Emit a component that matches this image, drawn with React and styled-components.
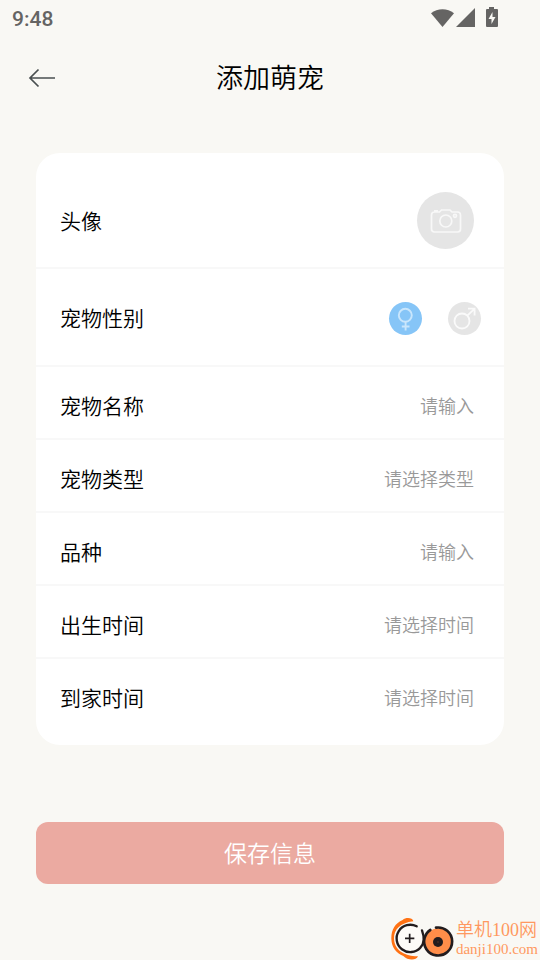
import React, { useState } from 'react';
import styled, { createGlobalStyle, css } from 'styled-components';

const GlobalStyle = createGlobalStyle`
  *, *::before, *::after {
    box-sizing: border-box;
  }

  body {
    margin: 0;
    background: #f9f8f4;
    color: #000;
    font-family: 'Noto Sans CJK SC', sans-serif;
    font-weight: 350;
  }

  button, input, select {
    font-family: inherit;
    font-weight: inherit;
  }
`;

const Page = styled.div`
  min-height: 100vh;
  display: flex;
  flex-direction: column;
`;

const StatusBar = styled.div`
  height: 36px;
  padding: 0 41px 0 12px;
  display: flex;
  align-items: center;
  justify-content: space-between;
  color: #656463;
`;

const Clock = styled.span`
  padding-top: 2px;
  font-family: Roboto, sans-serif;
  font-size: 21px;
  font-weight: 500;
  line-height: 34px;
`;

const StatusIcons = styled.svg`
  width: 68px;
  height: 22px;
  display: block;
`;

const Header = styled.header`
  height: 84px;
  padding: 0 24px;
  display: grid;
  grid-template-columns: 36px 1fr 36px;
  align-items: center;
`;

const BackButton = styled.button`
  width: 36px;
  height: 36px;
  padding: 0;
  border: none;
  background: none;
  cursor: pointer;

  svg {
    display: block;
  }
`;

const Title = styled.h1`
  margin: 0;
  padding-bottom: 2px;
  font-size: 27px;
  font-weight: inherit;
  line-height: 40px;
  text-align: center;
`;

const Form = styled.form`
  margin: 33px 36px 0;
`;

const Card = styled.div`
  padding: 15px 0;
  border-radius: 24px;
  background: #fff;
`;

const rowHeights = {
  avatar: '101px',
  gender: '98px',
  field: '73px',
};

const Row = styled.div`
  height: ${({ $kind = 'field' }) => rowHeights[$kind]};
  padding: ${({ $kind }) =>
    $kind === 'gender' ? '2px 23px 0 24px' : '6px 30px 0 24px'};
  display: flex;
  align-items: center;
  justify-content: space-between;
  border-bottom: 2px solid #f8f8f8;

  &:last-child {
    height: 71px;
    border-bottom: none;
  }
`;

const labelStyle = css`
  padding-bottom: 2px;
  font-size: 21px;
  line-height: 32px;
  white-space: nowrap;
`;

const Label = styled.label`
  ${labelStyle}
`;

const LabelText = styled.span`
  ${labelStyle}
`;

const fieldStyle = css`
  flex: 1;
  min-width: 0;
  height: 34px;
  margin: 0;
  padding: 0 0 2px;
  border: none;
  outline: none;
  background: transparent;
  color: #999;
  font-size: 18px;
  line-height: 32px;
  text-align: right;
`;

const TextInput = styled.input`
  ${fieldStyle}

  &::placeholder {
    color: #999;
    opacity: 1;
  }
`;

const Select = styled.select`
  ${fieldStyle}
  appearance: none;
  text-align-last: right;
`;

const PickerButton = styled.button`
  ${fieldStyle}
  cursor: pointer;
`;

const AvatarButton = styled.button`
  width: 57px;
  height: 57px;
  padding: 0;
  display: flex;
  align-items: center;
  justify-content: center;
  border: none;
  border-radius: 50%;
  background: #e5e5e5;
  cursor: pointer;
`;

const GenderGroup = styled.div`
  display: flex;
  gap: 26px;
`;

const GenderOption = styled.label`
  position: relative;
  width: 33px;
  height: 33px;
  border-radius: 50%;
  background: ${({ $active }) => ($active ? '#86c5f7' : '#e5e5e5')};
  cursor: pointer;

  svg {
    display: block;
  }
`;

const Radio = styled.input`
  position: absolute;
  inset: 0;
  width: 100%;
  height: 100%;
  margin: 0;
  opacity: 0;
  cursor: pointer;
`;

const SaveButton = styled.button`
  width: 100%;
  height: 62px;
  margin-top: 77px;
  padding: 0 0 2px;
  display: block;
  border: none;
  border-radius: 12px;
  background: #ebaaa1;
  color: #fff;
  font-size: 23px;
  line-height: 60px;
  cursor: pointer;
`;

const Brand = styled.footer`
  margin-top: auto;
  padding-right: 2px;
  display: flex;
  align-items: flex-end;
  justify-content: flex-end;
  gap: 1px;
  color: #ff9860;
`;

const BrandText = styled.div`
  padding-bottom: 2px;
  display: flex;
  flex-direction: column;
  font-family: 'Liberation Serif', 'Noto Sans CJK SC', serif;
`;

const BrandName = styled.span`
  font-size: 18px;
  line-height: 20px;
`;

const BrandSite = styled.span`
  font-size: 15px;
  line-height: 18px;
`;

const SystemIcons = () => (
  <StatusIcons viewBox="0 0 68 22" fill="currentColor" aria-hidden="true">
    <path d="M0 6.2C6.5 .8 16.500 .8 23 6.200L11.500 20Z" />
    <path d="M25 20L44 1V20Z" />
    <path
      fillRule="evenodd"
      d="M58 0h5v2h3q1 0 1 1v16q0 1-1 1H56q-1 0-1-1V3q0-1 1-1h2ZM61.500 5L57.500 12h3v5l4-7h-3Z"
    />
  </StatusIcons>
);

const BackIcon = () => (
  <svg width="36" height="36" viewBox="0 0 36 36" fill="none" stroke="#4a4f50" strokeWidth="1.700">
    <path d="M31 18H6M14.500 9.500L6 18l8.500 8.500" />
  </svg>
);

const CameraIcon = () => (
  <svg width="32" height="26" viewBox="0 0 32 26" fill="none" stroke="#f8f8f8" strokeWidth="1.700">
    <path d="M4.500 4H9.500L11.500 2H20L22 4H27.500Q30.500 4 30.500 7V21Q30.500 24 27.500 24H4.500Q1.500 24 1.500 21V7Q1.500 4 4.500 4ZM4 2.800H8" />
    <circle cx="15.800" cy="13" r="6" />
    <circle cx="25" cy="7.800" r="1.500" />
  </svg>
);

const FemaleIcon = () => (
  <svg width="33" height="33" viewBox="0 0 33 33" fill="none" stroke="#c9e6fc" strokeWidth="1.900">
    <circle cx="16.300" cy="13.300" r="6.500" />
    <path d="M16.600 20V28.500M12.800 24.500H20.500" />
  </svg>
);

const MaleIcon = () => (
  <svg width="33" height="33" viewBox="0 0 33 33" fill="none" stroke="#fafafa" strokeWidth="1.800">
    <circle cx="14" cy="19" r="7.500" />
    <path d="M19.300 13.700L26.500 6.800M20 6.700H26.600V13.500" />
  </svg>
);

const BrandLogo = () => (
  <svg width="64" height="43" viewBox="33 36 192 129" fill="none" aria-hidden="true">
    <path
      fill="#ff7214"
      d="M100 49C98 38 78 36 68 45C45 55 33 75 34 102C35 126 48 145 70 153C82 166 108 168 114 154C82 155 44 140 42 102C41 76 58 54 100 49Z"
    />
    <circle cx="90" cy="101" r="40" fill="#fdfbf8" />
    <path
      stroke="#221c1e"
      strokeWidth="7"
      strokeLinecap="round"
      d="M110 64A41 41 0 1 0 121 128C132 117 134 98 126 76"
    />
    <circle cx="175" cy="110" r="40" fill="#ff8d49" />
    <path
      stroke="#221c1e"
      strokeWidth="8"
      strokeLinecap="round"
      d="M168 68A42 42 0 1 1 134 98Q139 82 151 75"
    />
    <circle cx="174" cy="111" r="15" fill="#221c1e" />
    <circle cx="174" cy="111" r="2" fill="#6b3c24" />
    <path stroke="#221c1e" strokeWidth="5" d="M89 86V114M75 100H103" />
  </svg>
);

const App = () => {
  const [gender, setGender] = useState('female');

  return (
    <Page>
      <GlobalStyle />
      <StatusBar>
        <Clock>9:48</Clock>
        <SystemIcons />
      </StatusBar>
      <Header>
        <BackButton type="button" aria-label="返回">
          <BackIcon />
        </BackButton>
        <Title>添加萌宠</Title>
      </Header>
      <Form onSubmit={(e) => e.preventDefault()}>
        <Card>
          <Row $kind="avatar">
            <LabelText id="avatar-label">头像</LabelText>
            <AvatarButton type="button" aria-labelledby="avatar-label">
              <CameraIcon />
            </AvatarButton>
          </Row>
          <Row $kind="gender">
            <LabelText id="gender-label">宠物性别</LabelText>
            <GenderGroup role="radiogroup" aria-labelledby="gender-label">
              <GenderOption $active={gender === 'female'}>
                <Radio
                  type="radio"
                  name="gender"
                  aria-label="母"
                  checked={gender === 'female'}
                  onChange={() => setGender('female')}
                />
                <FemaleIcon />
              </GenderOption>
              <GenderOption $active={gender === 'male'}>
                <Radio
                  type="radio"
                  name="gender"
                  aria-label="公"
                  checked={gender === 'male'}
                  onChange={() => setGender('male')}
                />
                <MaleIcon />
              </GenderOption>
            </GenderGroup>
          </Row>
          <Row>
            <Label htmlFor="name">宠物名称</Label>
            <TextInput id="name" type="text" placeholder="请输入" />
          </Row>
          <Row>
            <Label htmlFor="type">宠物类型</Label>
            <Select id="type" defaultValue="">
              <option value="">请选择类型</option>
            </Select>
          </Row>
          <Row>
            <Label htmlFor="breed">品种</Label>
            <TextInput id="breed" type="text" placeholder="请输入" />
          </Row>
          <Row>
            <Label htmlFor="birthday">出生时间</Label>
            <PickerButton id="birthday" type="button">
              请选择时间
            </PickerButton>
          </Row>
          <Row>
            <Label htmlFor="homeday">到家时间</Label>
            <PickerButton id="homeday" type="button">
              请选择时间
            </PickerButton>
          </Row>
        </Card>
        <SaveButton type="submit">保存信息</SaveButton>
      </Form>
      <Brand>
        <BrandLogo />
        <BrandText>
          <BrandName>单机100网</BrandName>
          <BrandSite>danji100.com</BrandSite>
        </BrandText>
      </Brand>
    </Page>
  );
};

export default App;
